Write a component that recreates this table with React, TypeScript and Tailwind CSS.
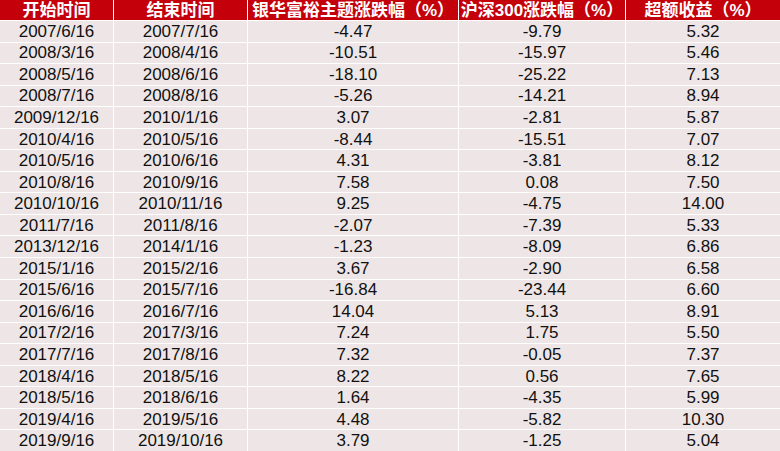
const rows = [
  ['2007/6/16', '2007/7/16', '-4.47', '-9.79', '5.32'],
  ['2008/3/16', '2008/4/16', '-10.51', '-15.97', '5.46'],
  ['2008/5/16', '2008/6/16', '-18.10', '-25.22', '7.13'],
  ['2008/7/16', '2008/8/16', '-5.26', '-14.21', '8.94'],
  ['2009/12/16', '2010/1/16', '3.07', '-2.81', '5.87'],
  ['2010/4/16', '2010/5/16', '-8.44', '-15.51', '7.07'],
  ['2010/5/16', '2010/6/16', '4.31', '-3.81', '8.12'],
  ['2010/8/16', '2010/9/16', '7.58', '0.08', '7.50'],
  ['2010/10/16', '2010/11/16', '9.25', '-4.75', '14.00'],
  ['2011/7/16', '2011/8/16', '-2.07', '-7.39', '5.33'],
  ['2013/12/16', '2014/1/16', '-1.23', '-8.09', '6.86'],
  ['2015/1/16', '2015/2/16', '3.67', '-2.90', '6.58'],
  ['2015/6/16', '2015/7/16', '-16.84', '-23.44', '6.60'],
  ['2016/6/16', '2016/7/16', '14.04', '5.13', '8.91'],
  ['2017/2/16', '2017/3/16', '7.24', '1.75', '5.50'],
  ['2017/7/16', '2017/8/16', '7.32', '-0.05', '7.37'],
  ['2018/4/16', '2018/5/16', '8.22', '0.56', '7.65'],
  ['2018/5/16', '2018/6/16', '1.64', '-4.35', '5.99'],
  ['2019/4/16', '2019/5/16', '4.48', '-5.82', '10.30'],
  ['2019/9/16', '2019/10/16', '3.79', '-1.25', '5.04'],
];

const headers = ['开始时间', '结束时间', '银华富裕主题涨跌幅（%）', '沪深300涨跌幅（%）', '超额收益（%）'];

export default function App() {
  return (
    <div
      className="w-[780px] h-[451px] bg-white grid grid-cols-[113px_133px_210px_166px_1fr] grid-rows-[20px_repeat(20,1fr)] gap-[1px] overflow-hidden"
      style={{ fontFamily: '"Liberation Sans", Arial, "Noto Sans CJK SC", sans-serif' }}
    >
      {headers.map((h) => (
        <div
          key={h}
          className="bg-[#c4000b] text-white font-bold text-[17px] leading-none flex items-center justify-center whitespace-nowrap"
        >
          {h}
        </div>
      ))}
      {rows.map((r, i) =>
        r.map((c, j) => (
          <div
            key={i + '-' + j}
            className="bg-[#eee6e6] text-[#111] text-[17px] leading-none flex items-center justify-center"
          >
            {c}
          </div>
        ))
      )}
    </div>
  );
}
